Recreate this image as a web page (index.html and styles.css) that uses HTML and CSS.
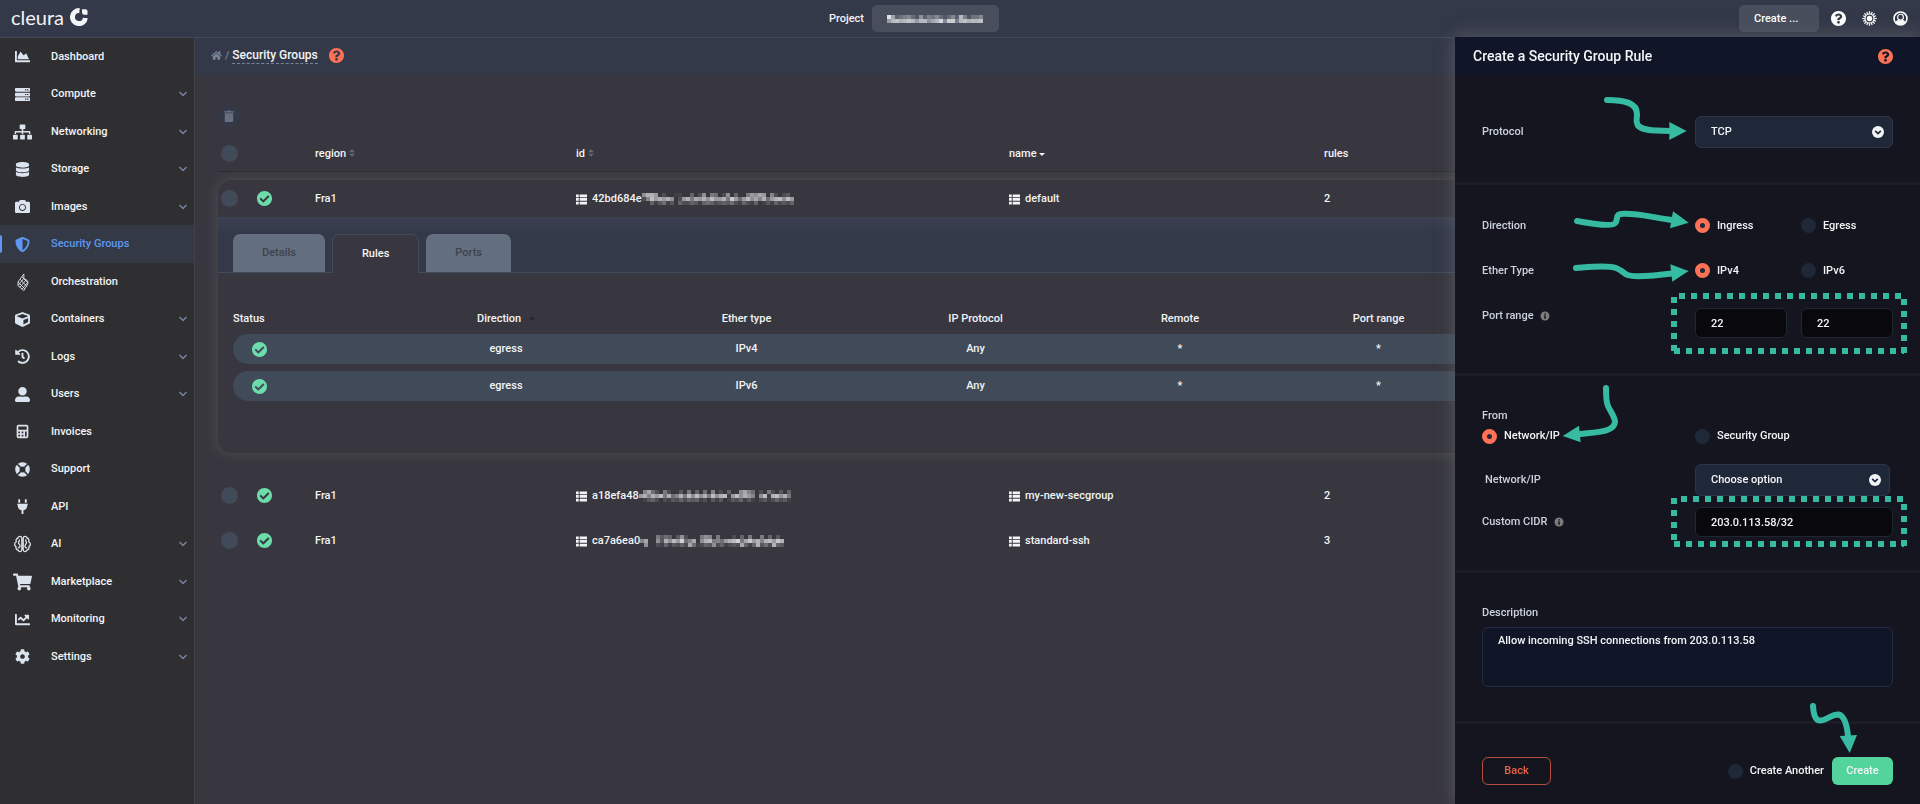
FILE: index.html
```html
<!DOCTYPE html>
<html lang="en">
<head>
  <meta charset="UTF-8">
  <meta name="viewport" content="width=device-width, initial-scale=1.0">
  <title>Security Groups</title>
  <link rel="stylesheet" href="styles.css">
</head>
<body>
  <!-- icon sprite -->
  <svg class="sprite" aria-hidden="true">
    <symbol id="i-chart" viewBox="0 0 512 512"><path d="M500 384c6.600 0 12 5.400 12 12v40c0 6.600-5.400 12-12 12H12c-6.600 0-12-5.400-12-12V76c0-6.600 5.400-12 12-12h40c6.600 0 12 5.400 12 12v308h436zM372.700 159.500L288 216l-85.300-113.700c-5.100-6.800-15.500-6.300-19.900 1L96 248v104h384l-89.900-187.800c-3.200-6.500-11.400-8.700-17.400-4.700z"/></symbol>
    <symbol id="i-server" viewBox="0 0 512 512"><path fill-rule="evenodd" d="M480 160H32c-18 0-32-14-32-32V64c0-18 14-32 32-32h448c18 0 32 14 32 32v64c0 18-14 32-32 32zM408 76h48v40h-48zM344 76h40v40h-40zM480 320H32c-18 0-32-14-32-32v-64c0-18 14-32 32-32h448c18 0 32 14 32 32v64c0 18-14 32-32 32zM408 236h48v40h-48zM344 236h40v40h-40zM480 480H32c-18 0-32-14-32-32v-64c0-18 14-32 32-32h448c18 0 32 14 32 32v64c0 18-14 32-32 32zM408 396h48v40h-48zM344 396h40v40h-40z"/></symbol>
    <symbol id="i-sitemap" viewBox="0 0 640 512"><path d="M128 352H32c-17.670 0-32 14.330-32 32v96c0 17.670 14.330 32 32 32h96c17.670 0 32-14.330 32-32v-96c0-17.670-14.330-32-32-32zm-24-80h192v48h48v-48h192v48h48v-57.590c0-21.170-17.230-38.410-38.410-38.410H344v-64h40c17.670 0 32-14.330 32-32V32c0-17.670-14.330-32-32-32H256c-17.670 0-32 14.330-32 32v96c0 17.670 14.330 32 32 32h40v64H94.410C73.230 224 56 241.230 56 262.410V320h48v-48zm264 80h-96c-17.670 0-32 14.330-32 32v96c0 17.670 14.330 32 32 32h96c17.670 0 32-14.330 32-32v-96c0-17.670-14.330-32-32-32zm240 0h-96c-17.670 0-32 14.330-32 32v96c0 17.670 14.330 32 32 32h96c17.670 0 32-14.330 32-32v-96c0-17.670-14.330-32-32-32z"/></symbol>
    <symbol id="i-database" viewBox="0 0 448 512"><path d="M448 73.143v45.714C448 159.143 347.667 192 224 192S0 159.143 0 118.857V73.143C0 32.857 100.333 0 224 0s224 32.857 224 73.143zM448 176v102.857C448 319.143 347.667 352 224 352S0 319.143 0 278.857V176c48.125 33.143 136.208 48.572 224 48.572S399.874 209.143 448 176zm0 160v102.857C448 479.143 347.667 512 224 512S0 479.143 0 438.857V336c48.125 33.143 136.208 48.572 224 48.572S399.874 369.143 448 336z"/></symbol>
    <symbol id="i-camera" viewBox="0 0 512 512"><path d="M512 144v288c0 26.500-21.500 48-48 48H48c-26.500 0-48-21.500-48-48V144c0-26.500 21.500-48 48-48h88l12.300-32.900c7-18.700 24.900-31.100 44.900-31.100h125.500c20 0 37.900 12.400 44.900 31.100L376 96h88c26.500 0 48 21.500 48 48zM376 288c0-66.200-53.800-120-120-120s-120 53.800-120 120 53.800 120 120 120 120-53.800 120-120zm-32 0c0 48.500-39.500 88-88 88s-88-39.500-88-88 39.500-88 88-88 88 39.500 88 88z"/></symbol>
    <symbol id="i-shield" viewBox="0 0 512 512"><path d="M466.500 83.700l-192-80a48.150 48.150 0 0 0-36.900 0l-192 80C27.700 91.100 16 108.600 16 128c0 198.500 114.500 335.700 221.500 380.300 11.800 4.900 25.100 4.900 36.900 0C360.100 472.600 496 349.300 496 128c0-19.400-11.700-36.900-29.500-44.300zM256.100 446.300l-.1-381 175.900 73.300c-3.300 151.400-82.100 261.100-175.800 307.700z"/></symbol>
    <symbol id="i-flame" viewBox="0 0 16 20"><g fill="none" stroke="currentColor"><path d="M9.500 1L3 10v4l6.500 5.500L14 12v-3L9.500 6zM3 10l7.500 7.500M5.500 7l7 7.500M7.500 4.500L14 11M9.500 6L3 14M12 7.500L5 16M14 10L7.500 18"/></g></symbol>
    <symbol id="i-cube" viewBox="0 0 512 512"><path d="M239.100 6.300l-208 78c-18.700 7-31.100 25-31.100 45v225.100c0 18.200 10.300 34.800 26.500 42.900l208 104c13.500 6.800 29.400 6.800 42.900 0l208-104c16.300-8.100 26.500-24.800 26.500-42.900V129.300c0-20-12.400-37.900-31.100-44.900l-208-78C262 2.200 250 2.200 239.100 6.300zM256 68.400l192 72v1.100l-192 78-192-78v-1.100l192-72zm32 356V275.500l160-65v133.900l-160 80z"/></symbol>
    <symbol id="i-history" viewBox="0 0 512 512"><path d="M504 255.531c.253 136.640-111.180 248.372-247.820 248.468-59.015.042-113.223-20.530-155.822-54.911-11.077-8.940-11.905-25.541-1.839-35.607l11.267-11.267c8.609-8.609 22.353-9.551 31.891-1.984C173.062 425.135 212.781 440 256 440c101.705 0 184-82.311 184-184 0-101.705-82.311-184-184-184-48.814 0-93.149 18.969-126.068 49.932l50.754 50.754c10.080 10.080 2.941 27.314-11.313 27.314H24c-8.837 0-16-7.163-16-16V38.627c0-14.254 17.234-21.393 27.314-11.314l49.372 49.372C129.209 34.136 189.552 8 256 8c136.810 0 247.747 110.780 248 247.531zm-180.912 78.784l9.823-12.630c8.138-10.463 6.253-25.542-4.210-33.679L288 256.349V152c0-13.255-10.745-24-24-24h-16c-13.255 0-24 10.745-24 24v135.651l65.409 50.874c10.463 8.137 25.541 6.253 33.679-4.210z"/></symbol>
    <symbol id="i-user" viewBox="0 0 512 512"><path d="M256 288c79.500 0 144-64.500 144-144S335.500 0 256 0 112 64.500 112 144s64.500 144 144 144zm128 32h-55.100c-22.200 10.200-46.900 16-72.900 16s-50.600-5.800-72.900-16H128c-70.700 0-128 57.300-128 128v16c0 26.500 21.500 48 48 48h416c26.500 0 48-21.500 48-48v-16c0-70.700-57.300-128-128-128z"/></symbol>
    <symbol id="i-calc" viewBox="0 0 16 18"><path fill-rule="evenodd" d="M3 1h10a2 2 0 0 1 2 2v12a2 2 0 0 1-2 2H3a2 2 0 0 1-2-2V3a2 2 0 0 1 2-2zM3 3v4h10V3zM3 9v2h2V9zM7 9v2h2V9zM11 9v2h2V9zM3 13v2h2v-2zM7 13v2h2v-2zM11 11v4h2v-4z"/></symbol>
    <symbol id="i-ring" viewBox="0 0 16 16"><circle cx="8" cy="8" r="5.500" fill="none" stroke="currentColor" stroke-width="4.600"/><path d="M2.500 2.500L6 6M13.500 2.500L10 6M2.500 13.500L6 10M13.500 13.500L10 10" stroke="#2f2f31" stroke-width="1.600"/></symbol>
    <symbol id="i-plug" viewBox="0 0 16 16"><path d="M4.500 0a1 1 0 0 1 1 1v3h-2V1a1 1 0 0 1 1-1zM11.500 0a1 1 0 0 1 1 1v3h-2V1a1 1 0 0 1 1-1zM2.500 5h11v2H13c0 3-1.500 4.500-4 5v4H7v-4c-2.500-.5-4-2-4-5h-.5z"/></symbol>
    <symbol id="i-brain" viewBox="0 0 18 18"><g fill="none" stroke="currentColor" stroke-width="1.300"><path d="M8.300 3C8 .8 5 .8 4.500 3 2.500 3.500 2.200 5.500 2.800 6.800 .6 8 .6 10.500 2.500 11.600c-.4 2 .7 3.400 2.200 3.500C5.300 17.300 8 17 8.300 15zM9.700 3c.3-2.200 3.300-2.200 3.800 0 2 .5 2.300 2.500 1.700 3.800 2.200 1.200 2.200 3.700.3 4.800.4 2-.7 3.400-2.200 3.500-.6 2.200-3.300 1.900-3.600-.1z"/><path d="M5.800 4.500C6.500 6 4.500 6.500 5 8s2 2 1.500 3.500-2 1-1.800 2M12.200 4.500C11.500 6 13.500 6.500 13 8s-2 2-1.500 3.500 2 1 1.800 2"/></g></symbol>
    <symbol id="i-cart" viewBox="0 0 576 512"><path d="M528 301l47-208c4-15-8-29-23-29H159l-9-45C148 8 138 0 127 0H24C11 0 0 11 0 24v16c0 13 11 24 24 24h70l70 343c-17 10-28 28-28 49 0 31 25 56 56 56s56-25 56-56c0-16-6-30-17-40h210c-11 10-17 24-17 40 0 31 25 56 56 56s56-25 56-56c0-22-13-41-32-50l6-25c3-15-8-29-23-29H218l-6-32h293c11 0 21-8 23-19z"/></symbol>
    <symbol id="i-line" viewBox="0 0 512 512"><path d="M496 384H64V80c0-8.840-7.160-16-16-16H16C7.160 64 0 71.160 0 80v336c0 17.670 14.330 32 32 32h464c8.840 0 16-7.160 16-16v-32c0-8.840-7.160-16-16-16zM464 96H345.940c-21.380 0-32.090 25.850-16.970 40.970l32.400 32.400L288 242.750l-73.370-73.370c-12.500-12.500-32.760-12.500-45.250 0l-68.690 68.690c-6.250 6.250-6.250 16.380 0 22.630l22.620 22.620c6.250 6.250 16.380 6.250 22.630 0L192 237.250l73.370 73.370c12.500 12.500 32.760 12.500 45.250 0l96-96 32.400 32.400c15.120 15.120 40.970 4.410 40.970-16.970V112c.01-8.840-7.150-16-15.990-16z"/></symbol>
    <symbol id="i-cog" viewBox="0 0 512 512"><path d="M487.400 315.700l-42.600-24.600c4.300-23.200 4.300-47 0-70.200l42.600-24.600c4.900-2.800 7.100-8.600 5.500-14-11.100-35.600-30-67.800-54.700-94.600-3.800-4.100-10-5.100-14.800-2.300L380.800 110c-17.900-15.400-38.500-27.300-60.800-35.100V25.800c0-5.600-3.900-10.500-9.400-11.700-36.700-8.200-74.300-7.800-109.200 0-5.500 1.200-9.400 6.100-9.400 11.700V75c-22.200 7.900-42.800 19.800-60.800 35.100L88.700 85.500c-4.900-2.800-11-1.900-14.800 2.300-24.700 26.700-43.600 58.900-54.700 94.600-1.700 5.400.6 11.200 5.500 14L67.300 221c-4.300 23.200-4.300 47 0 70.200l-42.600 24.600c-4.900 2.800-7.100 8.600-5.500 14 11.100 35.600 30 67.800 54.700 94.600 3.800 4.100 10 5.100 14.800 2.300l42.600-24.600c17.900 15.400 38.500 27.300 60.800 35.100v49.200c0 5.600 3.900 10.500 9.400 11.700 36.700 8.200 74.300 7.800 109.200 0 5.500-1.200 9.400-6.100 9.400-11.700v-49.200c22.200-7.900 42.800-19.800 60.800-35.100l42.600 24.600c4.900 2.800 11 1.900 14.800-2.300 24.700-26.700 43.600-58.900 54.700-94.600 1.500-5.500-.7-11.300-5.600-14.100zM256 336c-44.100 0-80-35.900-80-80s35.900-80 80-80 80 35.900 80 80-35.900 80-80 80z"/></symbol>
    <symbol id="i-down" viewBox="0 0 10 8"><path d="M1.500 2L5 5.500 8.500 2" fill="none" stroke="currentColor" stroke-width="1.500"/></symbol>
    <symbol id="i-home" viewBox="0 0 576 512"><path d="M280.370 148.260L96 300.110V464a16 16 0 0 0 16 16l112.060-.29a16 16 0 0 0 15.920-16V368a16 16 0 0 1 16-16h64a16 16 0 0 1 16 16v95.640a16 16 0 0 0 16 16.050L464 480a16 16 0 0 0 16-16V300L295.670 148.260a12.190 12.190 0 0 0-15.300 0zM571.600 251.470L488 182.560V44.050a12 12 0 0 0-12-12h-56a12 12 0 0 0-12 12v72.610L318.470 43a48 48 0 0 0-61 0L4.340 251.470a12 12 0 0 0-1.600 16.900l25.500 31A12 12 0 0 0 45.150 301l235.220-193.740a12.190 12.190 0 0 1 15.300 0L530.900 301a12 12 0 0 0 16.900-1.600l25.500-31a12 12 0 0 0-1.700-16.930z"/></symbol>
    <symbol id="i-help" viewBox="8 8 496 496"><path d="M504 256c0 136.997-111.043 248-248 248S8 392.997 8 256C8 119.083 119.043 8 256 8s248 111.083 248 248zM262.655 90c-54.497 0-89.255 22.957-116.549 63.758-3.536 5.286-2.353 12.415 2.715 16.258l34.699 26.310c5.205 3.947 12.621 3.008 16.665-2.122 17.864-22.658 30.113-35.797 57.303-35.797 20.429 0 45.698 13.148 45.698 32.958 0 14.976-12.363 22.667-32.534 33.976C247.128 238.528 216 254.941 216 296v4c0 6.627 5.373 12 12 12h56c6.627 0 12-5.373 12-12v-1.333c0-28.462 83.186-29.647 83.186-106.667 0-58.002-60.165-102-116.531-102zM256 338c-25.365 0-46 20.635-46 46 0 25.364 20.635 46 46 46s46-20.636 46-46c0-25.365-20.635-46-46-46z"/></symbol>
    <symbol id="i-check" viewBox="8 8 496 496"><path d="M504 256c0 136.967-111.033 248-248 248S8 392.967 8 256 119.033 8 256 8s248 111.033 248 248zM227.314 387.314l184-184c6.248-6.248 6.248-16.379 0-22.627l-22.627-22.627c-6.248-6.249-16.379-6.249-22.628 0L216 308.118l-70.059-70.059c-6.248-6.248-16.379-6.248-22.628 0l-22.627 22.627c-6.248 6.248-6.248 16.379 0 22.627l104 104c6.249 6.249 16.379 6.249 22.628.001z"/></symbol>
    <symbol id="i-sun" viewBox="0 0 16 16"><circle cx="8" cy="8" r="4.800" fill="none" stroke="currentColor" stroke-width="1.300"/><circle cx="8" cy="8" r="2.900"/><path d="M8 .3V3M8 13v2.700M.3 8H3M13 8h2.700M2.500 2.500l2 2M11.500 11.500l2 2M2.500 13.500l2-2M11.500 4.500l2-2M5.100 1.100l.9 2.200M10 12.700l.9 2.200M1.100 5.100l2.200.9M12.700 10l2.200.9M1.100 10.900l2.200-.9M12.700 6l2.200-.9M5.100 14.900l.9-2.200M10 3.300l.9-2.200" stroke="currentColor" stroke-width="1.300"/></symbol>
    <symbol id="i-person" viewBox="0 0 16 16"><circle cx="8" cy="8" r="6.900" fill="none" stroke="currentColor" stroke-width="1.700"/><circle cx="8" cy="6.600" r="3.100" fill="none" stroke="currentColor" stroke-width="1.200"/><path d="M2.500 11.500C4 10 5.500 9.600 6.200 9.600c1 .6 2.600.6 3.600 0 .7 0 2.200.4 3.700 1.900C12 14 10 15 8 15s-4-1-5.500-3.500z"/></symbol>
    <symbol id="i-trash" viewBox="0 0 10 12"><path d="M0 1.200h3L3.500.4h3l.5.8h3v1.300H0zM.8 3.200h8.400V11a1 1 0 0 1-1 1H1.800a1 1 0 0 1-1-1z"/></symbol>
    <symbol id="i-list" viewBox="0 0 12 12"><path d="M0 1h3v3H0zM4 1h8v3H4zM0 5h3v3H0zM4 5h8v3H4zM0 9h3v3H0zM4 9h8v3H4z"/></symbol>
    <symbol id="i-sort" viewBox="0 0 8 10"><path d="M4 0l4 4H0zM4 10L0 6h8z"/></symbol>
    <symbol id="i-caret" viewBox="0 0 8 10"><path d="M4 9L0 5h8z"/></symbol>
    <symbol id="i-caret-up" viewBox="0 0 8 10"><path d="M4 3L.5 7h7z"/></symbol>
    <symbol id="i-drop" viewBox="0 0 12 12"><circle cx="6" cy="6" r="6"/><path d="M3.200 4.800L6 7.500l2.800-2.700" fill="none" stroke="#1f2838" stroke-width="1.700"/></symbol>
    <symbol id="i-info" viewBox="0 0 10 10"><circle cx="5" cy="5" r="4.500"/><path d="M5 4.300v3.500M5 2.200v1.300" stroke="#14151e" stroke-width="1.500"/></symbol>
  </svg>

  <header class="topbar">
    <a href="#" class="logo">cleura
      <svg class="logo-mark" viewBox="0 0 18 18"><path d="M9.500 2.600A6.500 6.500 0 1 0 15.400 10" fill="none" stroke="currentColor" stroke-width="5"/><path d="M12 1.200h3.500a2 2 0 0 1 2 2v3.600h-3.200A2.300 2.300 0 0 1 12 4.500z"/></svg>
    </a>
    <div class="project">
      <span>Project</span>
      <button type="button" class="top-btn project-btn" aria-label="Select project"><span class="mosaic" data-rows="f92456317254631362b51446 8bcabcb8bb79be6dd5bcabbc"></span></button>
    </div>
    <div class="top-actions">
      <button type="button" class="top-btn create-menu">Create ...</button>
      <a href="#" aria-label="Help"><svg class="icon"><use href="#i-help"/></svg></a>
      <a href="#" aria-label="Theme"><svg class="icon"><use href="#i-sun"/></svg></a>
      <a href="#" aria-label="Account"><svg class="icon"><use href="#i-person"/></svg></a>
    </div>
  </header>

  <div class="layout">
    <nav class="sidebar">
      <a href="#"><svg class="icon"><use href="#i-chart"/></svg>Dashboard</a>
      <a href="#"><svg class="icon"><use href="#i-server"/></svg>Compute<svg class="arrow"><use href="#i-down"/></svg></a>
      <a href="#"><svg class="icon wide"><use href="#i-sitemap"/></svg>Networking<svg class="arrow"><use href="#i-down"/></svg></a>
      <a href="#"><svg class="icon"><use href="#i-database"/></svg>Storage<svg class="arrow"><use href="#i-down"/></svg></a>
      <a href="#"><svg class="icon"><use href="#i-camera"/></svg>Images<svg class="arrow"><use href="#i-down"/></svg></a>
      <a href="#" class="active"><svg class="icon"><use href="#i-shield"/></svg>Security Groups</a>
      <a href="#"><svg class="icon wide"><use href="#i-flame"/></svg>Orchestration</a>
      <a href="#"><svg class="icon"><use href="#i-cube"/></svg>Containers<svg class="arrow"><use href="#i-down"/></svg></a>
      <a href="#"><svg class="icon"><use href="#i-history"/></svg>Logs<svg class="arrow"><use href="#i-down"/></svg></a>
      <a href="#"><svg class="icon"><use href="#i-user"/></svg>Users<svg class="arrow"><use href="#i-down"/></svg></a>
      <a href="#"><svg class="icon"><use href="#i-calc"/></svg>Invoices</a>
      <a href="#"><svg class="icon"><use href="#i-ring"/></svg>Support</a>
      <a href="#"><svg class="icon"><use href="#i-plug"/></svg>API</a>
      <a href="#"><svg class="icon wide"><use href="#i-brain"/></svg>AI<svg class="arrow"><use href="#i-down"/></svg></a>
      <a href="#"><svg class="icon wide"><use href="#i-cart"/></svg>Marketplace<svg class="arrow"><use href="#i-down"/></svg></a>
      <a href="#"><svg class="icon"><use href="#i-line"/></svg>Monitoring<svg class="arrow"><use href="#i-down"/></svg></a>
      <a href="#"><svg class="icon"><use href="#i-cog"/></svg>Settings<svg class="arrow"><use href="#i-down"/></svg></a>
    </nav>

    <main class="main">
      <div class="breadcrumb">
        <a href="#" aria-label="Home"><svg class="home"><use href="#i-home"/></svg></a>
        <span class="slash">/</span>
        <a href="#" class="current">Security Groups</a>
        <svg class="icon help"><use href="#i-help"/></svg>
      </div>

      <div class="content">
        <button type="button" class="trash" aria-label="Delete selected"><svg><use href="#i-trash"/></svg></button>

        <table class="groups">
          <colgroup>
            <col class="col-pick"><col class="col-status"><col class="col-region"><col class="col-id"><col class="col-name"><col>
          </colgroup>
          <thead>
            <tr>
              <th><input type="checkbox" class="dot" aria-label="Select all"></th>
              <th></th>
              <th>region <svg class="sort"><use href="#i-sort"/></svg></th>
              <th>id <svg class="sort"><use href="#i-sort"/></svg></th>
              <th>name <svg class="sort on"><use href="#i-caret"/></svg></th>
              <th>rules</th>
            </tr>
          </thead>
          <tbody class="open">
            <tr>
              <td><input type="checkbox" class="dot" aria-label="Select default"></td>
              <td><svg class="ok"><use href="#i-check"/></svg></td>
              <td>Fra1</td>
              <td><div class="cell"><svg class="list"><use href="#i-list"/></svg><span>42bd684e</span><span class="mosaic" data-rows="8bb90200110040280650280400698a90720230 27c9b9b8029b6a9b8c99b6d959c8a7b59bc8c9 00413513042243145423435214214013142324"></span></div></td>
              <td><div class="cell"><svg class="list"><use href="#i-list"/></svg>default</div></td>
              <td>2</td>
            </tr>
            <tr>
              <td colspan="6" class="detail">
                <div class="tabs">
                  <button type="button">Details</button>
                  <button type="button" class="selected">Rules</button>
                  <button type="button">Ports</button>
                </div>
                <div class="tab-body">
                  <table class="rules">
                    <thead>
                      <tr><th>Status</th><th>Direction <svg class="sort dark"><use href="#i-caret-up"/></svg></th><th>Ether type</th><th>IP Protocol</th><th>Remote</th><th>Port range</th><th></th></tr>
                    </thead>
                    <tbody>
                      <tr><td><svg class="ok"><use href="#i-check"/></svg></td><td>egress</td><td>IPv4</td><td>Any</td><td>*</td><td>*</td><td></td></tr>
                      <tr><td><svg class="ok"><use href="#i-check"/></svg></td><td>egress</td><td>IPv6</td><td>Any</td><td>*</td><td>*</td><td></td></tr>
                    </tbody>
                  </table>
                </div>
              </td>
            </tr>
          </tbody>
          <tbody class="closed">
            <tr>
              <td><input type="checkbox" class="dot" aria-label="Select my-new-secgroup"></td>
              <td><svg class="ok"><use href="#i-check"/></svg></td>
              <td>Fra1</td>
              <td><div class="cell"><svg class="list"><use href="#i-list"/></svg><span>a18efa48</span><span class="mosaic" data-rows="07a52062003060405070204008a75020620304 9b7b9c6b57b6c8c8b6c8bc19c8b9708c1bc8b6 01342021324243412031301324131023124231"></span></div></td>
              <td><div class="cell"><svg class="list"><use href="#i-list"/></svg>my-new-secgroup</div></td>
              <td>2</td>
            </tr>
            <tr>
              <td><input type="checkbox" class="dot" aria-label="Select standard-ssh"></td>
              <td><svg class="ok"><use href="#i-check"/></svg></td>
              <td>Fra1</td>
              <td><div class="cell"><svg class="list"><use href="#i-list"/></svg><span>ca7a6ea0</span><span class="mosaic" data-rows="000063540382000687060002040600604030 7a0083b8c9e57a08bc6759bce6ad9b7bc9db 080021413242a512438241232a414b352b43"></span></div></td>
              <td><div class="cell"><svg class="list"><use href="#i-list"/></svg>standard-ssh</div></td>
              <td>3</td>
            </tr>
          </tbody>
        </table>
      </div>
    </main>
  </div>

  <aside class="drawer">
    <div class="drawer-head">
      <h1>Create a Security Group Rule</h1>
      <svg class="icon help"><use href="#i-help"/></svg>
    </div>

    <form class="drawer-form">
      <section class="protocol">
        <div class="field">
          <label for="protocol">Protocol</label>
          <div class="select">
            <select id="protocol"><option>TCP</option></select>
            <svg><use href="#i-drop"/></svg>
          </div>
        </div>
      </section>

      <section class="traffic">
        <div class="field">
          <span class="label">Direction</span>
          <div class="pair">
            <label class="choice"><input type="radio" name="direction" checked>Ingress</label>
            <label class="choice"><input type="radio" name="direction">Egress</label>
          </div>
        </div>
        <div class="field">
          <span class="label">Ether Type</span>
          <div class="pair">
            <label class="choice"><input type="radio" name="ether" checked>IPv4</label>
            <label class="choice"><input type="radio" name="ether">IPv6</label>
          </div>
        </div>
        <div class="field">
          <label for="port-min">Port range <svg class="info"><use href="#i-info"/></svg></label>
          <div class="pair">
            <input type="text" id="port-min" value="22">
            <input type="text" aria-label="Port range end" value="22">
          </div>
        </div>
      </section>

      <section class="from">
        <span class="label">From</span>
        <div class="field">
          <label class="choice"><input type="radio" name="from" checked>Network/IP</label>
          <label class="choice"><input type="radio" name="from">Security Group</label>
        </div>
        <div class="field network">
          <label for="network">Network/IP</label>
          <div class="select">
            <select id="network"><option>Choose option</option></select>
            <svg><use href="#i-drop"/></svg>
          </div>
        </div>
        <div class="field">
          <label for="cidr">Custom CIDR <svg class="info"><use href="#i-info"/></svg></label>
          <input type="text" id="cidr" value="203.0.113.58/32">
        </div>
      </section>

      <section class="description">
        <label for="description">Description</label>
        <textarea id="description">Allow incoming SSH connections from 203.0.113.58</textarea>
      </section>

      <footer class="drawer-foot">
        <button type="button" class="back">Back</button>
        <label class="choice"><input type="checkbox">Create Another</label>
        <button type="submit" class="create">Create</button>
      </footer>
    </form>

    <!-- hints drawn over the form -->
    <svg class="hints" viewBox="1455 37 465 767" aria-hidden="true">
      <g class="hint-line">
        <path d="M1607 100C1625 100 1637 103 1637 114C1637 118 1636 121 1637 123C1638 130 1650 131 1670 131"/>
        <path d="M1577 221C1594 224 1614 227.500 1616 222C1618 216 1616 214 1624 213.800C1640 213.500 1655 218 1672 220"/>
        <path d="M1576 268C1590 267 1608 265 1616 268C1626 272 1622 276 1638 276.300C1650 276 1660 275 1672 273.500"/>
        <path d="M1606 388C1606 396 1606 402 1608 406C1610 411 1615 417 1615 422C1614 432 1598 432 1580 434"/>
        <path d="M1813 706C1813.500 714 1815 720.500 1820 720.500C1826 720.500 1832 714 1838.500 714.500C1845 716 1847 726 1848 736"/>
      </g>
      <g class="hint-head">
        <path d="M1669.300 122L1686.700 131L1669.300 140z"/>
        <path d="M1673 211.300L1688.700 222.700L1670 228.300z"/>
        <path d="M1670.300 264.300L1688.700 271L1672.300 281.700z"/>
        <path d="M1562.700 436L1579 425.700L1580.700 442.300z"/>
        <path d="M1839.700 736L1857 735L1849.700 753z"/>
      </g>
      <g class="hint-box">
        <path d="M1679 296H1904M1904 299V354M1674 297V351M1674 351H1904"/>
        <path d="M1681 499H1904M1904 504V547M1674 498V540M1674 544H1904"/>
      </g>
    </svg>
  </aside>

  <script>
    // masked values: one hex digit per 4px cell, the digit is its brightness
    document.querySelectorAll('.mosaic').forEach(function (el) {
      const rows = el.dataset.rows.split(' ')
      const width = rows[0].length * 4
      let cells = ''
      rows.forEach(function (row, y) {
        row.split('').forEach(function (digit, x) {
          cells += `<rect x="${x * 4}" y="${y * 4}" width="4" height="4" fill-opacity="${parseInt(digit, 16) / 17}"/>`
        })
      })
      el.innerHTML = `<svg width="${width}" height="${rows.length * 4}" shape-rendering="crispEdges">${cells}</svg>`
    })
  </script>
</body>
</html>
```
FILE: styles.css
```css
* {
  box-sizing: border-box;
}

body {
  margin: 0;
  min-height: 100vh;
  display: flex;
  flex-direction: column;
  background: #38373f;
  color: #f3f4f6;
  font: 500 11px/16px Roboto, sans-serif;
  overflow: hidden;
}

a {
  color: inherit;
  text-decoration: none;
}

button,
input,
select,
textarea {
  font: inherit;
  color: inherit;
  margin: 0;
}

svg {
  display: block;
  fill: currentColor;
}

.sprite {
  position: absolute;
  width: 0;
  height: 0;
}

.icon {
  width: 15px;
  height: 15px;
}

.help {
  color: #fd7256;
}

/* top bar */
.topbar {
  display: grid;
  grid-template-columns: 9fr auto 10fr;
  align-items: center;
  height: 38px;
  background: #343949;
  border-bottom: 1px solid #41495a;
}

.logo {
  display: flex;
  align-items: center;
  gap: 6px;
  padding: 0 0 4px 11px;
  font: 400 20px/28px Lato, sans-serif;
}

.logo-mark {
  width: 18px;
  height: 18px;
}

.project {
  display: flex;
  align-items: center;
  gap: 8px;
}

.top-btn {
  height: 27px;
  border: 0;
  border-radius: 5px;
  background: #484e5c;
}

.project-btn {
  width: 127px;
  padding: 0 15px;
}

.project-btn .mosaic {
  margin: 0;
}

.top-actions {
  display: flex;
  justify-content: flex-end;
  align-items: center;
  gap: 16px;
  padding-right: 12px;
  color: #fff;
}

.create-menu {
  width: 80px;
  margin-right: -4px;
  padding: 0 15px;
  text-align: left;
}

/* side navigation */
.layout {
  flex: 1;
  display: flex;
}

.sidebar {
  width: 195px;
  flex: none;
  background: #2f2f31;
  border-right: 1px solid #424147;
}

.sidebar a {
  position: relative;
  display: flex;
  align-items: center;
  height: 37px;
  padding: 0 6px 0 15px;
}

.sidebar a:nth-child(even) {
  height: 38px;
}

.sidebar .icon {
  margin-right: 21px;
  color: #dbe3ee;
}

.sidebar .icon.wide {
  width: 19px;
  height: 18px;
  margin: 0 19px 0 -2px;
}

.sidebar .arrow {
  width: 10px;
  height: 8px;
  margin-left: auto;
  color: #76859a;
}

.sidebar .active,
.sidebar .active .icon {
  color: #5d97f3;
}

.sidebar .active {
  background: #343946;
}

.sidebar .active::before {
  content: "";
  position: absolute;
  left: 0;
  width: 2px;
  height: 18px;
  border-radius: 0 2px 2px 0;
  background: #5d97f3;
}

/* main area */
.main {
  flex: 1;
  min-width: 0;
}

.breadcrumb {
  display: flex;
  align-items: center;
  height: 37px;
  padding: 0 0 2px 16px;
  background: #343949;
}

.home {
  width: 11px;
  height: 11px;
  color: #76859a;
}

.slash {
  margin: 0 3px;
  color: #76859a;
}

.current {
  border-bottom: 1px dashed #76859a;
  font-size: 12px;
}

.breadcrumb .help {
  margin-left: 11px;
}

.content {
  padding: 30px 18px 0 23px;
}

.trash {
  display: grid;
  place-items: center;
  width: 22px;
  height: 22px;
  padding: 0;
  border: 0;
  border-radius: 50%;
  background: #343949;
  color: #68707f;
}

.trash svg {
  width: 10px;
  height: 12px;
}

table {
  width: 100%;
  border-collapse: separate;
  border-spacing: 0;
}

th {
  font-weight: 500;
}

.groups {
  table-layout: fixed;
  margin-top: 9px;
}

.groups > thead > tr > th {
  height: 36px;
  padding: 0;
  text-align: left;
  border-bottom: 1px solid #2c2c32;
}

.groups > thead::after {
  content: "";
  display: block;
  height: 8px;
}

.groups td {
  padding: 0;
}

.col-pick {
  width: 39px;
}

.col-status {
  width: 58px;
}

.col-region {
  width: 261px;
}

.col-id {
  width: 433px;
}

.col-name {
  width: 315px;
}

.dot {
  display: block;
  appearance: none;
  width: 17px;
  height: 17px;
  margin-left: 3px;
  border-radius: 50%;
  background: #414a58;
}

.ok {
  width: 15px;
  height: 15px;
  color: #6cdcab;
}

.sort {
  display: inline-block;
  width: 6px;
  height: 8px;
  color: #5f6b7c;
}

.sort.on {
  color: #f3f4f6;
}

.sort.dark {
  margin-left: 5px;
  color: #222226;
}

.cell {
  display: flex;
  align-items: center;
}

.list {
  width: 11px;
  height: 12px;
  margin-right: 5px;
}

.mosaic {
  display: block;
}

.open {
  border-radius: 14px;
  box-shadow: 0 0 12px 2px #4a4a4e;
}

.open > tr:first-child > td {
  height: 37px;
}

.closed::before {
  content: "";
  display: block;
  height: 20px;
}

.closed td {
  height: 45px;
}

/* expanded row */
.tabs {
  display: flex;
  gap: 7px;
  padding: 17px 15px 0;
  background: linear-gradient(#3b4152, #343949 16px);
  border-bottom: 1px solid #414b5a;
}

.tabs button {
  height: 38px;
  padding: 0 29px;
  border: 0;
  border-radius: 7px 7px 0 0;
  background: #636e7f;
  color: #3d434d;
}

.tabs .selected {
  height: 39px;
  margin-bottom: -1px;
  border: 1px solid #414b5a;
  border-bottom: 0;
  background: #38373f;
  color: #f3f4f6;
}

.tab-body {
  padding: 30px 15px 45px;
}

.rules {
  border-spacing: 0 7px;
}

.rules th,
.rules td {
  padding: 0;
  text-align: center;
}

.rules th {
  height: 17px;
}

.rules td {
  height: 30px;
  background: #414a58;
}

.rules td:first-child {
  padding-left: 19px;
  border-radius: 15px 0 0 15px;
}

.rules th:first-child {
  width: 157px;
  text-align: left;
}

.rules th:nth-child(2) {
  width: 232px;
}

.rules th:nth-child(3) {
  width: 249px;
}

.rules th:nth-child(4) {
  width: 209px;
}

.rules th:nth-child(5) {
  width: 200px;
}

.rules th:nth-child(6) {
  width: 197px;
}

/* drawer */
.drawer {
  position: fixed;
  top: 37px;
  right: 0;
  bottom: 0;
  width: 465px;
  background: #14151e;
  box-shadow: 0 0 16px rgba(110, 114, 120, 0.6);
}

.drawer-head {
  display: flex;
  justify-content: space-between;
  align-items: center;
  height: 38px;
  padding: 0 27px 0 18px;
  background: #101628;
}

.drawer-head h1 {
  margin: 0;
  font-size: 14px;
  font-weight: 500;
}

.drawer-form label,
.drawer-form .label {
  color: #cbd2dc;
}

.drawer-form .choice {
  display: flex;
  align-items: center;
  gap: 7px;
  color: #f3f4f6;
}

.drawer-form section {
  padding: 0 27px;
  border-bottom: 3px solid #1b1c25;
}

.field {
  display: grid;
  grid-template-columns: 213px 1fr;
  align-items: center;
}

.pair {
  display: grid;
  grid-template-columns: 1fr 1fr;
  gap: 14px;
}

.choice input {
  appearance: none;
  width: 15px;
  height: 15px;
  border-radius: 50%;
  background: #1f2838;
}

.choice input:checked {
  border: 5px solid #fd7256;
}

.select {
  display: grid;
  align-items: center;
}

.select select,
.select svg {
  grid-area: 1 / 1;
}

.select select {
  appearance: none;
  width: 100%;
  height: 32px;
  padding: 0 15px;
  border: 1px solid #2b3648;
  border-radius: 6px;
  background: #1f2838;
}

.select svg {
  width: 12px;
  height: 12px;
  margin-right: 9px;
  justify-self: end;
  pointer-events: none;
}

input[type="text"] {
  width: 100%;
  min-width: 0;
  height: 30px;
  padding: 0 15px;
  border: 1px solid #1f2735;
  border-radius: 6px;
  background: #09090d;
}

.info {
  display: inline-block;
  width: 10px;
  height: 10px;
  margin-left: 4px;
  vertical-align: -2px;
  color: #7c7c7c;
}

.drawer-form .protocol {
  padding-top: 41px;
  padding-bottom: 34px;
}

.drawer-form .traffic {
  padding-top: 18px;
  padding-bottom: 34px;
}

.traffic .field {
  height: 45px;
}

.traffic .field:last-child {
  height: 46px;
  align-items: start;
  padding-top: 15px;
}

.drawer-form .from {
  padding-top: 32px;
  padding-bottom: 33px;
}

.from .label {
  display: block;
}

.from .field:nth-child(2) {
  height: 24px;
}

.from .network {
  margin: 16px 3px 11px 0;
}

.network label {
  padding-left: 3px;
}

.drawer-form .description {
  padding-top: 32px;
  padding-bottom: 34px;
}

.description label {
  display: block;
  margin-bottom: 6px;
}

textarea {
  display: block;
  width: 100%;
  height: 60px;
  padding: 5px 15px;
  border: 1px solid #222c40;
  border-radius: 6px;
  background: #101628;
  resize: none;
}

.drawer-foot {
  display: flex;
  align-items: center;
  gap: 8px;
  padding: 33px 27px 0;
}

.drawer-foot button {
  height: 28px;
  border: 0;
  border-radius: 6px;
}

.drawer-foot .back {
  width: 69px;
  margin-right: auto;
  border: 1px solid #b24e42;
  background: none;
  color: #ee6348;
}

.drawer-foot .create {
  width: 61px;
  background: #52d49c;
}

.hints {
  position: absolute;
  top: 0;
  left: 0;
  width: 465px;
  height: 767px;
  pointer-events: none;
}

.hint-line {
  fill: none;
  stroke: #36baa2;
  stroke-width: 6;
  stroke-linecap: round;
}

.hint-head {
  fill: #36baa2;
}

.hint-box {
  fill: none;
  stroke: #36baa2;
  stroke-width: 6;
  stroke-dasharray: 6;
}
```
